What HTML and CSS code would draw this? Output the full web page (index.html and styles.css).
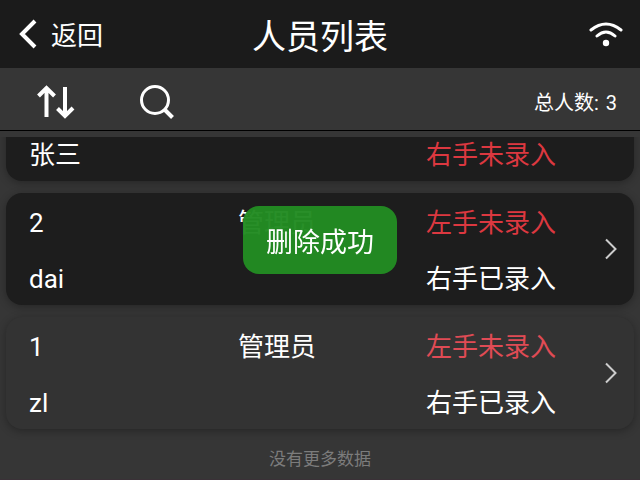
FILE: index.html
```
<!DOCTYPE html>
<html lang="zh-CN">
<head>
    <meta charset="UTF-8">
    <meta name="viewport" content="width=device-width, initial-scale=1.0">
    <title>人员列表</title>
    <link rel="stylesheet" href="styles.css">
</head>
<body>
    <header class="header">
        <button type="button" class="back">
            <svg width="20" height="30" viewBox="0 0 20 30"><path d="M18 2 5 15l13 13" fill="none" stroke="#fff" stroke-width="4"/></svg>
            <span>返回</span>
        </button>
        <h1>人员列表</h1>
        <svg class="wifi" width="34" height="26" viewBox="1 0 34 26">
            <path d="M3 9Q18-3 33 9M9 15Q18 7 27 15" fill="none" stroke="#fff" stroke-width="3" stroke-linecap="round"/>
            <circle cx="18" cy="22" r="3.200" fill="#fff"/>
        </svg>
    </header>

    <div class="toolbar">
        <button type="button" aria-label="排序">
            <svg width="38" height="34" viewBox="0 0 38 34"><path d="M9.500 32V3M1.500 11l8-8 8 8M28 2v29M20.500 23.500l7.500 7.500 8-8" fill="none" stroke="#fff" stroke-width="4"/></svg>
        </button>
        <button type="button" aria-label="搜索">
            <svg width="36" height="36" viewBox="0 0 36 36"><circle cx="16" cy="16" r="13.500" fill="none" stroke="#fff" stroke-width="3"/><path d="M25 25l8.500 8.500" stroke="#fff" stroke-width="4"/></svg>
        </button>
        <div class="total"><span>总人数:</span><span>3</span></div>
    </div>

    <main class="list">
        <div class="list-inner">
            <a href="#" class="card">
                <span class="name">张三</span>
                <span class="hand missing">右手未录入</span>
                <svg class="arrow" width="14" height="22" viewBox="0 0 14 22"><path d="M2 1.500 11.500 11 2 20.500" fill="none" stroke="#ccc" stroke-width="2"/></svg>
            </a>
            <a href="#" class="card">
                <span>2</span>
                <span>管理员</span>
                <span class="missing">左手未录入</span>
                <span class="name">dai</span>
                <span class="hand">右手已录入</span>
                <svg class="arrow" width="14" height="22" viewBox="0 0 14 22"><path d="M2 1.500 11.500 11 2 20.500" fill="none" stroke="#ccc" stroke-width="2"/></svg>
            </a>
            <a href="#" class="card active">
                <span>1</span>
                <span>管理员</span>
                <span class="missing">左手未录入</span>
                <span class="name">zl</span>
                <span class="hand">右手已录入</span>
                <svg class="arrow" width="14" height="22" viewBox="0 0 14 22"><path d="M2 1.500 11.500 11 2 20.500" fill="none" stroke="#ccc" stroke-width="2"/></svg>
            </a>
            <p class="no-more">没有更多数据</p>
        </div>
    </main>

    <div class="toast" role="status">删除成功</div>
</body>
</html>
```

FILE: styles.css
```
* {
    box-sizing: border-box;
}
body {
    margin: 0;
    height: 100vh;
    display: flex;
    flex-direction: column;
    border-bottom: 1px solid #3a3137;
    background-color: #363636;
    color: #fff;
    font-family: Roboto, "Noto Sans CJK SC", sans-serif;
    font-size: 26px;
}
button {
    padding: 0;
    border: none;
    background: none;
    color: inherit;
    font: inherit;
    cursor: pointer;
}
svg {
    display: block;
}
.header {
    flex: none;
    display: grid;
    grid-template-columns: 1fr auto 1fr;
    align-items: center;
    height: 68px;
    padding: 0 17px;
    background-color: #1b1b1b;
}
.back {
    display: flex;
    align-items: center;
    gap: 14px;
    justify-self: start;
}
.back span {
    padding-top: 4px;
    line-height: 36px;
}
.header h1 {
    margin: 0;
    padding-top: 6px;
    font-size: 34px;
    font-weight: 400;
    line-height: 36px;
}
.wifi {
    justify-self: end;
}
.toolbar {
    flex: none;
    display: flex;
    align-items: center;
    gap: 64px;
    height: 63px;
    padding: 5px 23px 0 37px;
    border-bottom: 1px solid #000;
}
.total {
    display: flex;
    gap: 7px;
    margin-left: auto;
    padding-top: 2px;
    font-size: 20px;
    line-height: 24px;
}
/* reversed so the list opens scrolled to its end */
.list {
    flex: 1;
    min-height: 0;
    display: flex;
    flex-direction: column-reverse;
    margin-top: 6px;
    padding: 0 6px;
    overflow-y: auto;
    scrollbar-width: none;
}
.list-inner {
    flex: none;
}
.card {
    display: grid;
    grid-template-columns: 209fr 188fr 178fr 14px;
    grid-template-rows: 56px 56px;
    align-items: center;
    margin-bottom: 12px;
    padding: 0 16px 0 23px;
    border-radius: 16px;
    background-color: #1d1d1d;
    box-shadow: 0 2px 8px rgba(0, 0, 0, 0.3);
    color: #fff;
    line-height: 52px;
    text-decoration: none;
}
.card span {
    padding-top: 4px;
}
.card.active {
    background-color: #333;
}
.name {
    grid-row: 2;
    grid-column: 1;
}
.hand {
    grid-row: 2;
    grid-column: 3;
}
.missing {
    color: #dc3840;
}
.active .missing {
    color: #e04b55;
}
.arrow {
    grid-row: 1 / 3;
    grid-column: 4;
}
.no-more {
    margin: 0;
    padding-bottom: 2px;
    color: #7c7c7c;
    font-size: 17px;
    line-height: 36px;
    text-align: center;
}
.toast {
    position: fixed;
    top: 50%;
    left: 50%;
    transform: translate(-50%, -50%);
    padding: 6px 23px 0;
    border-radius: 16px;
    background-color: rgba(34, 139, 34, 0.97);
    font-size: 27px;
    line-height: 62px;
    white-space: nowrap;
}
```
